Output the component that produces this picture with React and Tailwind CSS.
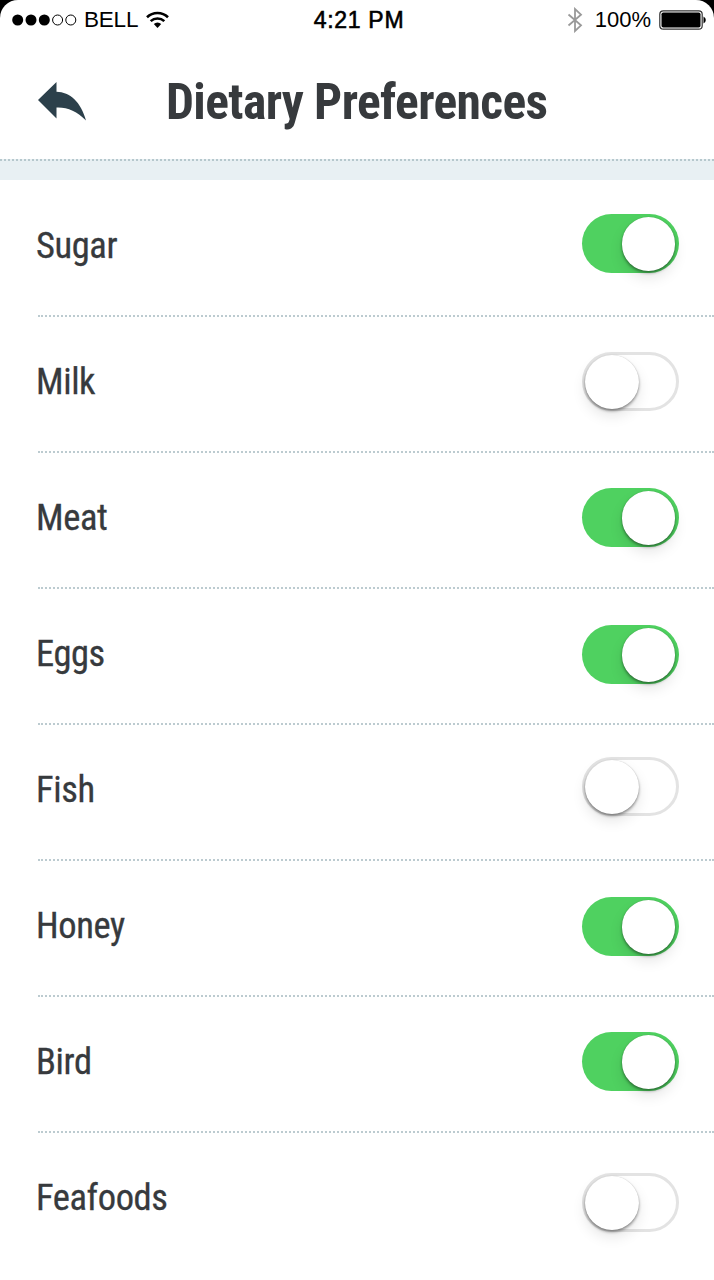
import React from "react";

const items = [
  { label: "Sugar", on: true, pad: "pt-[33px]" },
  { label: "Milk", on: false, pad: "pt-[35px]" },
  { label: "Meat", on: true, pad: "pt-[35px]" },
  { label: "Eggs", on: true, pad: "pt-[36px]" },
  { label: "Fish", on: false, pad: "pt-[32px]" },
  { label: "Honey", on: true, pad: "pt-[36px]" },
  { label: "Bird", on: true, pad: "pt-[35px]" },
  { label: "Feafoods", on: false, pad: "pt-[40px]" },
];

function Toggle({ on }) {
  return (
    <button
      role="switch"
      aria-checked={on}
      className={
        on
          ? "flex h-[59px] w-[97px] items-start justify-end rounded-full bg-[#4fd160] pt-[3px] pr-[4px]"
          : "flex h-[59px] w-[97px] items-start justify-start rounded-full border-[3px] border-[#e3e3e3] bg-white"
      }
    >
      <span className="size-[53.5px] rounded-full bg-white shadow-[0_0_1px_rgba(0,0,0,0.2),0_2px_3px_rgba(0,0,0,0.4),0_7px_14px_rgba(0,0,0,0.1)]" />
    </button>
  );
}

function StatusBar() {
  return (
    <div className="flex h-10 items-center justify-between pr-[8px] pl-[12px] font-['Liberation_Sans',sans-serif] text-[22px] leading-10 text-black">
      <div className="flex w-[230px] items-center">
        <svg width="65" height="12" viewBox="0 0 65 12">
          <circle cx="5.7" cy="6" r="5.5" />
          <circle cx="19" cy="6" r="5.5" />
          <circle cx="32.3" cy="6" r="5.5" />
          <circle cx="45.6" cy="6" r="5" fill="none" stroke="#000" />
          <circle cx="58.8" cy="6" r="5" fill="none" stroke="#000" />
        </svg>
        <span className="ml-[7px] text-[22.5px] tracking-[-0.2px]">BELL</span>
        <svg className="ml-[8px]" width="23" height="18" viewBox="0 0 23 18">
          <g fill="none" stroke="#000" strokeWidth="2.6">
            <path d="M1 6.2a15.2 15.2 0 0 1 21 0" />
            <path d="M4.7 10.1a10 10 0 0 1 13.6 0" />
          </g>
          <path d="M7.8 13a5.3 5.3 0 0 1 7.4 0L11.5 17z" />
        </svg>
      </div>
      <span className="text-[23px] tracking-[0.7px] [-webkit-text-stroke:0.6px_#000]">4:21 PM</span>
      <div className="flex w-[230px] items-center justify-end">
        <svg width="16" height="26" viewBox="0 0 16 26" fill="none" stroke="#999" strokeWidth="1.8">
          <path d="M1.5 7.5 14 18.3 8 24V2l6 5.7L1.5 18.5" />
        </svg>
        <span className="ml-[12px]">100%</span>
        <svg className="ml-[8px]" width="47" height="20" viewBox="0 0 47 20">
          <rect x="0.8" y="0.8" width="42.4" height="18.4" rx="3.5" fill="#fff" stroke="#333" strokeWidth="1.2" />
          <rect x="2.5" y="2.5" width="39" height="15" rx="1.8" />
          <path d="M44.500 6.500q2.300 1 2.300 3.500t-2.300 3.500z" />
        </svg>
      </div>
    </div>
  );
}

export default function App() {
  return (
    <div className="h-[1280px] w-[714px] overflow-hidden bg-black font-['Roboto_Condensed','Roboto',sans-serif] text-[#373a3d] [font-stretch:75%]">
      <div className="flex h-full flex-col rounded-t-[18px] bg-white">
        <StatusBar />
        <header className="flex h-[119px] items-start pt-[28px] pl-[38px]">
          <button aria-label="Back" className="mt-[14px] h-[39px] w-[48px]">
            <svg width="48" height="39" viewBox="0 0 48 39" fill="#2c404b">
              <path d="M0 18 18.500 0V9.800C32 10 43 20 48 38.500 39 29 29 25 18.500 25.500V36.500z" />
            </svg>
          </button>
          <h1 className="ml-[80px] text-[49.5px] leading-[69px] font-bold tracking-[-0.6px] whitespace-nowrap">
            Dietary Preferences
          </h1>
        </header>
        <div className="h-[21px] shrink-0 border-t-2 border-dotted border-[#b6c8cd] bg-[#e8f0f3]" />
        <ul className="pt-px pl-[38px]">
          {items.map((item) => (
            <li
              key={item.label}
              className="flex h-[136px] items-start justify-between border-b-2 border-dotted border-[#bccbd0] pr-[35px] last:border-b-0"
            >
              <span className="-ml-[2px] pt-[37px] text-[36.5px] leading-[56px] tracking-[-0.4px] [-webkit-text-stroke:0.3px_#373a3d]">
                {item.label}
              </span>
              <div className={item.pad}>
                <Toggle on={item.on} />
              </div>
            </li>
          ))}
        </ul>
      </div>
    </div>
  );
}
